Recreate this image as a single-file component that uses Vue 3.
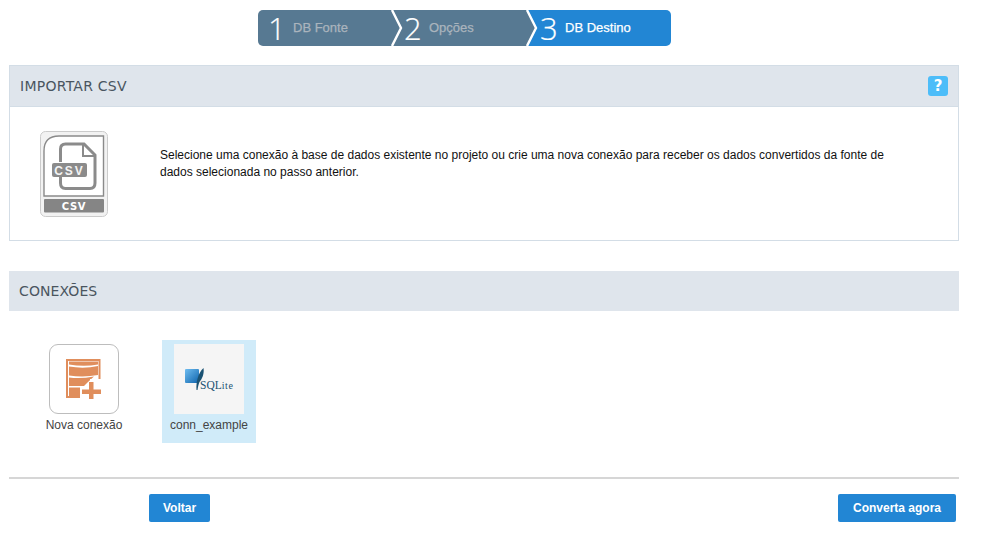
<script setup>
const steps = [
  { n: 1, label: 'DB Fonte', w: 134, pad: 10 },
  { n: 2, label: 'Opções', w: 135, pad: 12 },
  { n: 3, label: 'DB Destino', w: 144, pad: 13, active: true },
]
</script>

<template>
  <div class="page">
    <nav class="steps">
      <div
        v-for="(s, i) in steps"
        :key="s.n"
        class="step"
        :class="{ active: s.active, first: i === 0, last: i === 2 }"
        :style="{ width: s.w + 'px', paddingLeft: s.pad + 'px' }"
      >
        <span class="num">{{ s.n }}</span>
        <span class="lbl">{{ s.label }}</span>
        <svg v-if="i < 2" class="chev" width="14" height="36" viewBox="0 0 14 36">
          <path d="M0 0 H1 L10 18 L1 36 H0 Z" fill="#577992" />
          <path d="M1 0 L10 18 L1 36" fill="none" stroke="#fff" stroke-width="2.4" />
        </svg>
      </div>
    </nav>

    <section class="panel">
      <header class="phead">
        <h2>IMPORTAR CSV</h2>
        <span class="help">?</span>
      </header>
      <div class="pbody">
        <svg class="csv" width="68" height="86" viewBox="0 0 68 86">
          <rect x="0.5" y="0.5" width="67" height="85" rx="5" fill="#f2f2f2" stroke="#cbcbcb" />
          <path d="M4 65 V20 Q4 5 19 5 H63.5 V65 Z" fill="#fff" stroke="#8a8a8a" stroke-width="1.4" />
          <path d="M20.5 31 V18 Q20.5 13 25.5 13 H44 L55 24 V52 Q55 57.5 50 57.5 H25.5 Q20.5 57.5 20.5 52 V46" fill="none" stroke="#8b8b8b" stroke-width="3" />
          <path d="M43 13 V25 H55" fill="none" stroke="#8b8b8b" stroke-width="2" />
          <rect x="12" y="32" width="35" height="14" rx="2" fill="#8b8b8b" />
          <text x="29.5" y="43.5" class="csv-in">CSV</text>
          <rect x="4" y="68" width="60" height="13.5" rx="1" fill="#858585" />
          <text x="34" y="79" class="csv-lb">CSV</text>
        </svg>
        <p>Selecione uma conexão à base de dados existente no projeto ou crie uma nova conexão para receber os dados convertidos da fonte de dados selecionada no passo anterior.</p>
      </div>
    </section>

    <section class="conn">
      <header class="chead">CONEXÕES</header>
      <div class="tiles">
        <div class="tile new">
          <div class="box">
            <svg width="36" height="40" viewBox="0 0 36 40">
              <rect x="1" y="1" width="32.5" height="37" fill="#fff" stroke="#e08e5c" stroke-width="2" />
              <path d="M3 2.5 H32 V5.5 Q18 8 3 5.5 Z" fill="#e08e5c" />
              <path d="M3 7.5 Q18 10 32 7 V16 Q18 18.5 3 16.5 Z" fill="#e08e5c" />
              <path d="M3 18.5 Q15 20 28 17.5 L22 23 L18 27 H3 Z" fill="#e08e5c" />
              <path d="M3 28.5 H16 V37 H3 Z" fill="#e08e5c" />
              <path d="M24 20 H36 V40 H14 V28 H24 Z" fill="#fff" />
              <path d="M23 23 H27.5 V30.5 H35 V35 H27.5 V40 H23 V35 H16 V30.5 H23 Z" fill="#e08e5c" />
            </svg>
          </div>
          <span>Nova conexão</span>
        </div>
        <div class="tile sel">
          <div class="box2">
            <svg width="52" height="26" viewBox="0 0 52 26">
              <defs>
                <linearGradient id="sq" x1="0" y1="0" x2="1" y2="1">
                  <stop offset="0" stop-color="#6fbdf0" />
                  <stop offset="1" stop-color="#0f64ad" />
                </linearGradient>
              </defs>
              <rect x="2" y="3" width="14" height="14" rx="1" fill="url(#sq)" />
              <path d="M13.5 24 C13 16 15 7 20.5 2 C21.5 8 19 13 16.5 16 C15.5 18 15 21 14.5 24 Z" fill="#1a5273" />
              <text x="17" y="22.5" class="sq">SQL<tspan class="li">ite</tspan></text>
            </svg>
          </div>
          <span>conn_example</span>
        </div>
      </div>
    </section>

    <footer class="foot">
      <div class="rule"></div>
      <div class="btns">
        <button class="back">Voltar</button>
        <button class="go">Converta agora</button>
      </div>
    </footer>
  </div>
</template>

<style>
html, body { margin: 0; background: #fff; }
</style>

<style scoped>
.page {
  width: 981px;
  height: 544px;
  box-sizing: border-box;
  padding: 10px 22px 0 9px;
  font-family: "Liberation Sans", Arial, sans-serif;
  overflow: hidden;
}
.steps { display: flex; margin-left: 249px; height: 36px; }
.step {
  position: relative;
  display: flex;
  align-items: center;
  box-sizing: border-box;
  background: #577992;
  color: #fff;
}
.step.first { border-radius: 5px 0 0 5px; }
.step.last { border-radius: 0 5px 5px 0; }
.step.active { background: #2286d4; }
.num {
  font-family: "Open Sans", sans-serif;
  font-weight: 300;
  font-size: 31px;
  line-height: 36px;
  width: 25px;
  -webkit-text-stroke: 0.2px currentColor;
}
.lbl {
  font-size: 13px;
  line-height: 34px;
  margin-bottom: 1px;
  color: #aab4bd;
  -webkit-text-stroke: 0.25px currentColor;
}
.active .lbl { color: #fff; }
.chev { position: absolute; right: -13px; top: 0; z-index: 1; }

.panel {
  margin-top: 19px;
  border: 1px solid #d3dde6;
  height: 176px;
  box-sizing: border-box;
}
.phead {
  display: flex;
  align-items: center;
  justify-content: space-between;
  height: 40px;
  padding: 0 10px;
  background: #dfe5ec;
  border-bottom: 1px solid #d3dde6;
}
h2 {
  margin: 0;
  font-family: "DejaVu Sans", sans-serif;
  font-weight: 400;
  font-size: 14px;
  letter-spacing: 0.25px;
  color: #4a5560;
}
.help {
  width: 20px;
  height: 20px;
  border-radius: 3px;
  background: #4dbdf9;
  color: #fff;
  font: 700 15px/20px "DejaVu Sans", sans-serif;
  text-align: center;
}
.pbody { display: flex; padding: 24px 0 0 30px; }
.csv { flex: none; }
.csv-in { font: 700 12px "Liberation Sans", sans-serif; fill: #f4f4f4; text-anchor: middle; letter-spacing: 2px; }
.csv-lb { font: 700 10px "DejaVu Sans", sans-serif; fill: #fff; text-anchor: middle; letter-spacing: 0.6px; }
p {
  margin: 16px 0 0 52px;
  width: 745px;
  font-size: 12px;
  line-height: 17px;
  color: #111;
}

.conn { margin-top: 30px; }
.chead {
  height: 40px;
  line-height: 40px;
  padding-left: 10px;
  background: #dfe5ec;
  font-family: "DejaVu Sans", sans-serif;
  font-size: 14px;
  letter-spacing: 0.1px;
  color: #4a5560;
}
.tiles { display: flex; padding: 29px 0 0 32px; align-items: flex-start; gap: 35px; }
.tile { display: flex; flex-direction: column; align-items: center; font-size: 12px; color: #444; box-sizing: border-box; }
.tile.new { width: 86px; padding-top: 4px; }
.tile.new span { margin-top: 4px; }
.box {
  width: 70px;
  height: 70px;
  box-sizing: border-box;
  border: 1px solid #bdbdbd;
  border-radius: 9px;
  display: flex;
  align-items: center;
  justify-content: center;
}
.tile.sel { width: 94px; height: 103px; background: #d0ebf9; padding-top: 4px; }
.tile.sel span { margin-top: 4px; }
.box2 {
  width: 70px;
  height: 70px;
  background: #f5f5f5;
  display: flex;
  align-items: center;
  justify-content: center;
}
.sq { font: 11.5px "Liberation Serif", serif; fill: #1a5273; }
.li { font-size: 10px; letter-spacing: 0.6px; }

.foot { margin-top: 34px; }
.rule { height: 2px; background: #d6d6d6; }
.btns { display: flex; justify-content: space-between; padding: 15px 3px 0 140px; }
button {
  height: 28px;
  border: 0;
  border-radius: 2px;
  background: #2286d4;
  color: #fff;
  font: 700 12px "Liberation Sans", Arial, sans-serif;
}
.back { width: 61px; }
.go { width: 118px; }
</style>
